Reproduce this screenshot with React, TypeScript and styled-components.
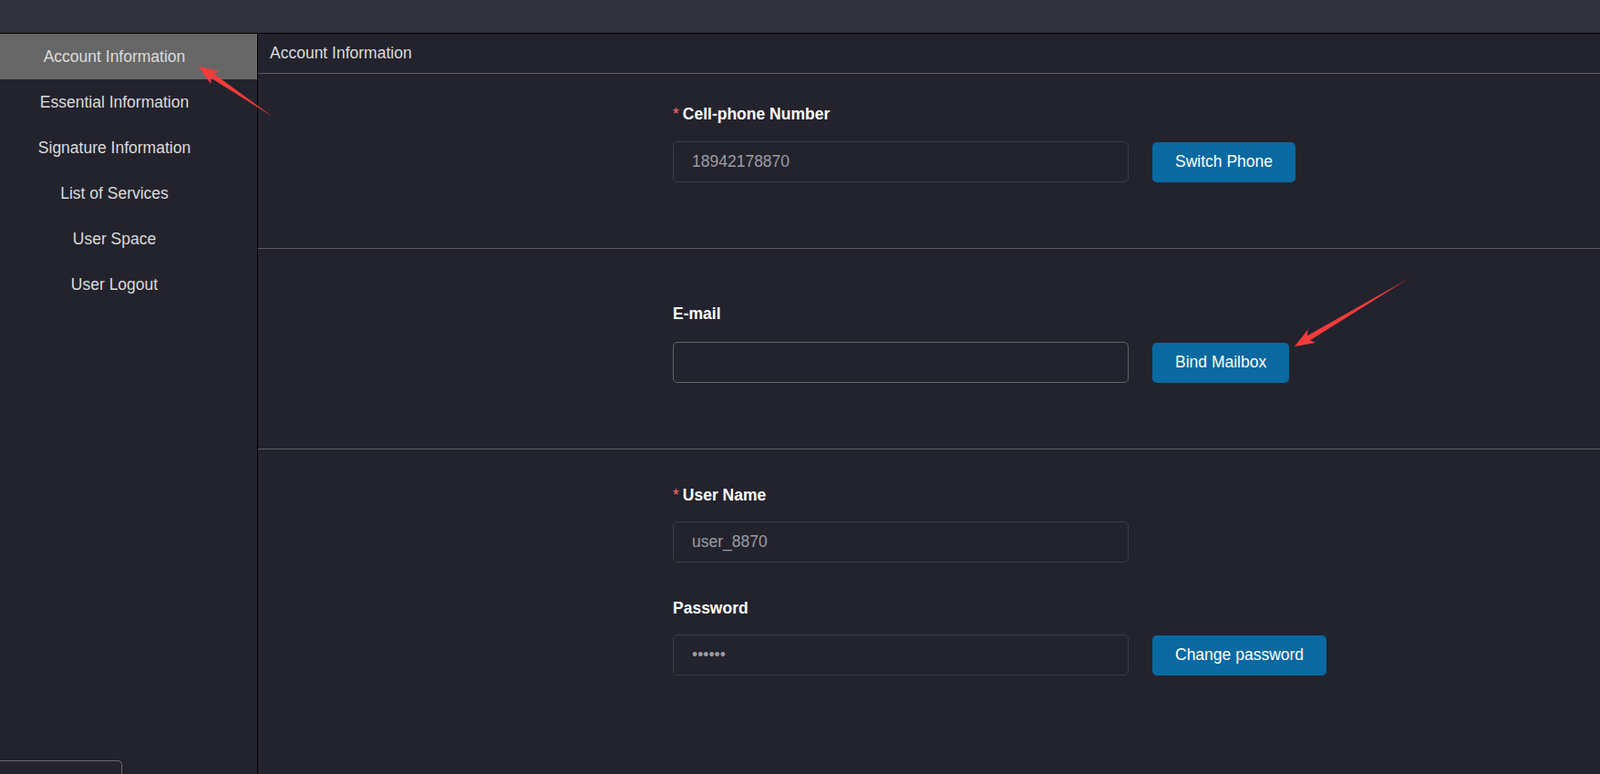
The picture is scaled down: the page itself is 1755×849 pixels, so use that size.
import React from "react";
import styled, { createGlobalStyle } from "styled-components";

const GlobalStyle = createGlobalStyle`
  html, body {
    margin: 0;
    padding: 0;
    height: 100%;
    overflow: hidden;
    background: #23232d;
    font-family: "Liberation Sans", Arial, sans-serif;
  }
  #root {
    height: 100%;
  }
`;

const Page = styled.div`
  position: relative;
  height: 100vh;
  display: flex;
  flex-direction: column;
  background: #23232d;
`;

const TopBar = styled.div`
  height: 36px;
  flex-shrink: 0;
  background: #32323c;
  border-bottom: 1px solid #000;
`;

const Body = styled.div`
  flex: 1;
  display: flex;
  min-height: 0;
`;

const Sidebar = styled.nav`
  width: 282px;
  flex-shrink: 0;
  border-right: 1px solid #000;
  display: flex;
  flex-direction: column;
`;

const NavItem = styled.div<{ $active?: boolean }>`
  height: 50px;
  display: flex;
  align-items: center;
  justify-content: center;
  padding: 1px 31px 0 0;
  box-sizing: border-box;
  font-size: 17.5px;
  color: #dcdcdc;
  background: ${(p) => (p.$active ? "#676767" : "transparent")};
  cursor: pointer;
`;

const SideFooter = styled.div`
  margin-top: auto;
  width: 133px;
  height: 14px;
  border-top: 1px solid #6a6a6a;
  border-right: 1px solid #6a6a6a;
  border-top-right-radius: 5px;
`;

const Main = styled.main`
  flex: 1;
  display: flex;
  flex-direction: column;
`;

const MainHeader = styled.div`
  height: 42px;
  display: flex;
  align-items: center;
  padding: 0 0 1px 13px;
  border-bottom: 1px solid #5e5e62;
  font-size: 17.5px;
  color: #dcdcdc;
`;

const Section = styled.section<{ $top: number; $bottom: number; $divider?: boolean }>`
  padding: ${(p) => `${p.$top}px 0 ${p.$bottom}px 455px`};
  border-bottom: ${(p) => (p.$divider ? "1px solid #5e5e62" : "none")};
`;

const Field = styled.div<{ $gap?: number }>`
  margin-top: ${(p) => p.$gap ?? 0}px;
`;

const Label = styled.div<{ $spacing: number }>`
  height: 20px;
  line-height: 20px;
  font-size: 17.5px;
  font-weight: bold;
  color: #fff;
  margin-bottom: ${(p) => p.$spacing}px;
`;

const Star = styled.span`
  color: #f56c6c;
  font-weight: normal;
  margin-right: 4px;
`;

const Row = styled.div`
  display: flex;
  align-items: center;
  gap: 26px;
`;

const Input = styled.input<{ $bright?: boolean }>`
  box-sizing: border-box;
  width: 500px;
  height: 45px;
  padding: 0 20px;
  background: #23232d;
  border: 1px solid ${(p) => (p.$bright ? "#606068" : "#3c3c46")};
  border-radius: 5px;
  color: #9c9ca4;
  font-family: "Liberation Sans", Arial, sans-serif;
  font-size: 17.5px;
  outline: none;
`;

const Button = styled.button`
  box-sizing: border-box;
  height: 44px;
  padding: 0 25px;
  background: #0969a0;
  border: none;
  border-radius: 5px;
  color: #fff;
  font-family: "Liberation Sans", Arial, sans-serif;
  font-size: 17.5px;
  cursor: pointer;
`;

const Overlay = styled.svg`
  position: absolute;
  left: 0;
  top: 0;
  width: 100%;
  height: 100%;
  pointer-events: none;
`;

type Pt = [number, number];

// screenshot-tool style arrow: thin tail, widening shaft, barbed head
const arrowPoints = (tail: Pt, tip: Pt) => {
  const dx = tip[0] - tail[0];
  const dy = tip[1] - tail[1];
  const len = Math.hypot(dx, dy);
  const ux = dx / len;
  const uy = dy / len;
  const nx = -uy;
  const ny = ux;
  const at = (d: number, w: number): string =>
    `${tip[0] - ux * d + nx * w},${tip[1] - uy * d + ny * w}`;
  return [
    `${tail[0]},${tail[1]}`,
    at(18, 3),
    at(22, 8.5),
    `${tip[0]},${tip[1]}`,
    at(22, -8.5),
    at(18, -3),
  ].join(" ");
};

const navItems = [
  "Account Information",
  "Essential Information",
  "Signature Information",
  "List of Services",
  "User Space",
  "User Logout",
];

const App: React.FC = () => {
  return (
    <Page>
      <GlobalStyle />
      <TopBar />
      <Body>
        <Sidebar>
          {navItems.map((item, i) => (
            <NavItem key={item} $active={i === 0}>
              {item}
            </NavItem>
          ))}
          <SideFooter />
        </Sidebar>

        <Main>
          <MainHeader>Account Information</MainHeader>

          <Section $top={34} $bottom={72} $divider>
            <Label $spacing={20}>
              <Star>*</Star>Cell-phone Number
            </Label>
            <Row>
              <Input value="18942178870" readOnly />
              <Button>Switch Phone</Button>
            </Row>
          </Section>

          <Section $top={61} $bottom={72} $divider>
            <Label $spacing={21}>E-mail</Label>
            <Row>
              <Input $bright value="" readOnly />
              <Button>Bind Mailbox</Button>
            </Row>
          </Section>

          <Section $top={40} $bottom={0}>
            <Field>
              <Label $spacing={19}>
                <Star>*</Star>User Name
              </Label>
              <Input value="user_8870" readOnly />
            </Field>
            <Field $gap={40}>
              <Label $spacing={19}>Password</Label>
              <Row>
                <Input type="password" value="123456" readOnly />
                <Button>Change password</Button>
              </Row>
            </Field>
          </Section>
        </Main>
      </Body>

      <Overlay>
        <polygon points={arrowPoints([299, 128], [218, 73])} fill="#f23b3b" />
        <polygon points={arrowPoints([1546, 305], [1420, 380])} fill="#f23b3b" />
      </Overlay>
    </Page>
  );
};

export default App;
